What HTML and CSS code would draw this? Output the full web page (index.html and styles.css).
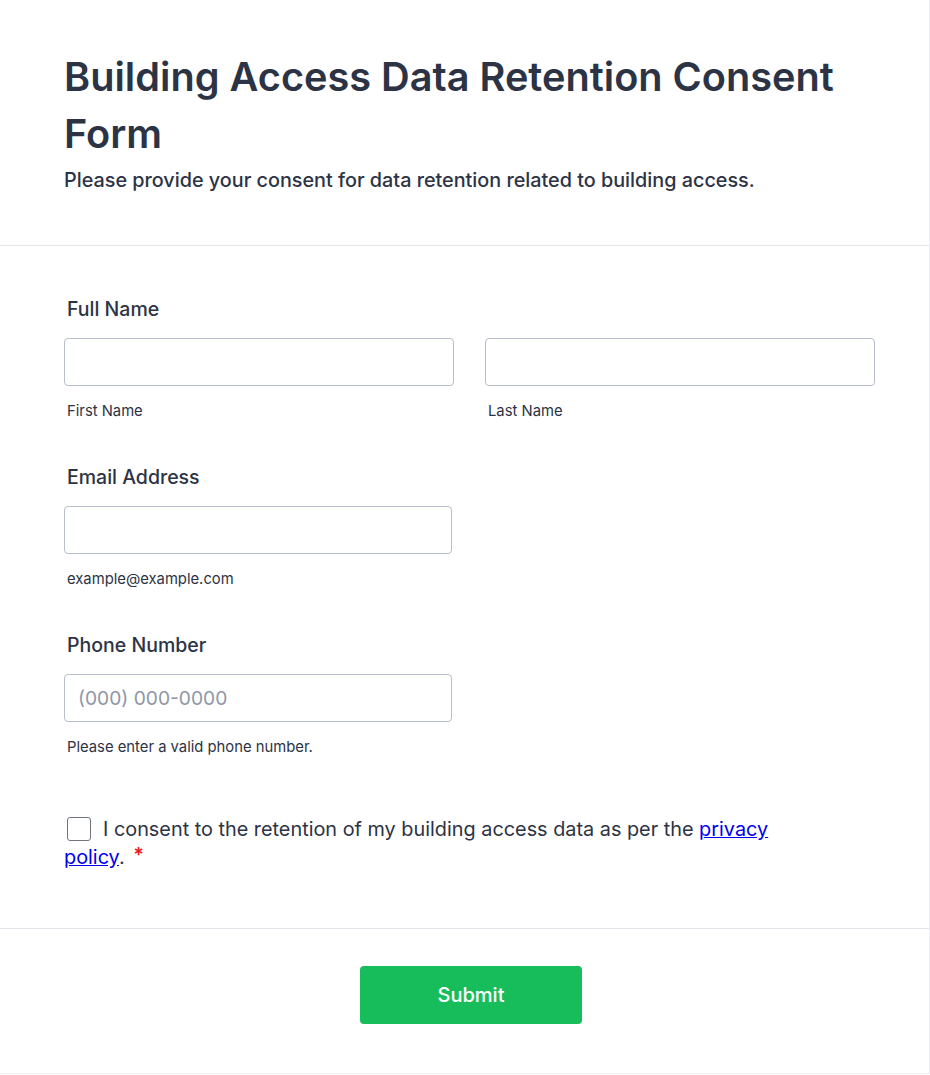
FILE: index.html
```html
<!DOCTYPE html>
<html lang="en">
<head>
<meta charset="utf-8">
<title>Building Access Data Retention Consent Form</title>
<link rel="stylesheet" href="styles.css">
</head>
<body>
<div class="card">
  <header class="form-header">
    <h1 class="form-title">Building Access Data Retention Consent Form</h1>
    <p class="form-subtitle">Please provide your consent for data retention related to building access.</p>
  </header>
  <form class="form-body">
    <div class="field">
      <label class="field-label">Full Name</label>
      <div class="name-row">
        <div class="sub-field">
          <input class="text-input" type="text">
          <span class="sub-label">First Name</span>
        </div>
        <div class="sub-field">
          <input class="text-input" type="text">
          <span class="sub-label">Last Name</span>
        </div>
      </div>
    </div>
    <div class="field">
      <label class="field-label">Email Address</label>
      <div class="sub-field half">
        <input class="text-input" type="email">
        <span class="sub-label">example@example.com</span>
      </div>
    </div>
    <div class="field">
      <label class="field-label">Phone Number</label>
      <div class="sub-field half">
        <input class="text-input" type="tel" placeholder="(000) 000-0000">
        <span class="sub-label">Please enter a valid phone number.</span>
      </div>
    </div>
    <div class="consent">
      <span class="checkbox"></span>I consent to the retention of my building access data as per the <a href="#" class="link">privacy policy</a>. <span class="required">*</span>
    </div>
  </form>
  <footer class="form-footer">
    <button class="submit-btn" type="button">Submit</button>
  </footer>
</div>
</body>
</html>
```
FILE: styles.css
```css
html, body {
  margin: 0;
  padding: 0;
  background: #ffffff;
}
body {
  font-family: Inter, "Noto Sans", sans-serif;
  color: #2c3345;
}
.card {
  width: 929px;
  height: 1073px;
  border-right: 1px solid #eceef3;
  border-bottom: 1px solid #eceef3;
  background: #fff;
  display: flex;
  flex-direction: column;
}
.form-header {
  padding: 49px 64px 51px 64px;
  border-bottom: 1px solid #e3e5ea;
}
.form-title {
  margin: 0;
  font-size: 39.7px;
  line-height: 57px;
  font-weight: 600;
  color: #2c3345;
}
.form-subtitle {
  margin: 3px 0 0;
  font-size: 19.8px;
  line-height: 28px;
  font-weight: 500;
  color: #2c3345;
}
.form-body {
  padding: 49px 54px 48px 64px;
  display: flex;
  flex-direction: column;
  gap: 42px;
  border-bottom: 1px solid #e3e5ea;
  height: 683px;
  box-sizing: border-box;
}
.field {
  display: flex;
  flex-direction: column;
}
.field-label {
  padding-left: 3px;
  font-size: 19.5px;
  line-height: 28px;
  font-weight: 500;
  margin-bottom: 15px;
}
.name-row {
  display: flex;
  gap: 31px;
}
.sub-field {
  display: flex;
  flex-direction: column;
  width: 390px;
}
.sub-field.half {
  width: 388px;
}
.text-input {
  box-sizing: border-box;
  height: 48px;
  width: 100%;
  border: 1px solid #b8bdcb;
  border-radius: 4px;
  padding: 0 13px;
  font-family: Inter, sans-serif;
  font-size: 19.2px;
  color: #2c3345;
  background: #fff;
  margin: 0;
}
.text-input::placeholder {
  color: #8f96a6;
}
.sub-label {
  padding-left: 3px;
  margin-top: 15px;
  font-size: 14.8px;
  line-height: 20px;
  color: #2c3345;
}
.consent {
  margin-top: 16px;
  font-size: 19.85px;
  line-height: 28px;
  color: #2c3345;
  width: 720px;
}
.checkbox {
  display: inline-block;
  box-sizing: border-box;
  width: 24px;
  height: 24px;
  border: 1.5px solid #6f747e;
  border-radius: 3px;
  margin: 0 12px 0 3px;
  vertical-align: -5px;
  background: #fff;
}
.link {
  color: #0000ee;
  text-decoration: underline;
}
.required {
  color: #f01c1c;
  font-weight: 600;
  margin-left: 3px;
  position: relative;
  top: -2px;
}
.form-footer {
  display: flex;
  justify-content: center;
  padding-top: 37px;
}
.submit-btn {
  width: 222px;
  height: 58px;
  border: none;
  border-radius: 4px;
  background: #18bd5b;
  color: #fff;
  font-family: Inter, sans-serif;
  font-size: 20px;
  font-weight: 500;
  cursor: pointer;
  margin-left: 13px;
}
```
